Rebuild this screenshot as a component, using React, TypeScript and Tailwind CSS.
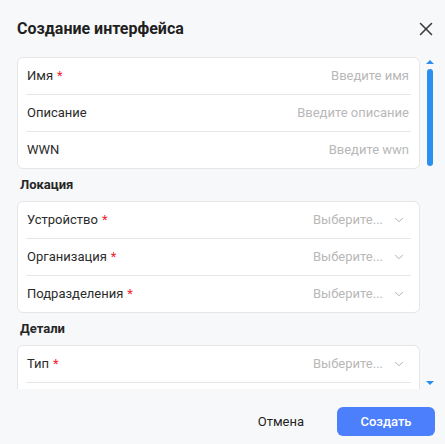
import React from 'react';
import { X, ChevronDown } from 'lucide-react';

type Field = {
  label: string;
  required?: boolean;
  placeholder: string;
  select?: boolean;
};

const generalFields: Field[] = [
  { label: 'Имя', required: true, placeholder: 'Введите имя' },
  { label: 'Описание', placeholder: 'Введите описание' },
  { label: 'WWN', placeholder: 'Введите wwn' },
];

const locationFields: Field[] = [
  { label: 'Устройство', required: true, placeholder: 'Выберите...', select: true },
  { label: 'Организация', required: true, placeholder: 'Выберите...', select: true },
  { label: 'Подразделения', required: true, placeholder: 'Выберите...', select: true },
];

// second row sits below the fold, only its divider is visible
const detailFields: Field[] = [
  { label: 'Тип', required: true, placeholder: 'Выберите...', select: true },
  { label: '', placeholder: '', select: false },
];

const FieldRow: React.FC<{ field: Field; last: boolean }> = ({ field, last }) => (
  <div className={`mx-2 flex items-center justify-between ${last ? 'h-[36px]' : 'h-[37px] border-b border-[#e4e6ea]'}`}>
    <div className="pl-px text-[13px] text-[#2b2b2b]">
      {field.label}
      {field.required && <span className="ml-1 text-[#f5222d]">*</span>}
    </div>
    {field.select ? (
      <div className="flex items-center text-[13px] text-[#b8b8b8]">
        <span>{field.placeholder}</span>
        <ChevronDown className="ml-[9px] mr-[5px] h-[14px] w-[14px] text-[#a3a3a3]" strokeWidth={1.5} />
      </div>
    ) : (
      <div className="pr-[2px] text-[13px] text-[#b8b8b8]">{field.placeholder}</div>
    )}
  </div>
);

const Card: React.FC<{ fields: Field[] }> = ({ fields }) => (
  <div className="rounded-md border border-[#e4e6ea] bg-white">
    {fields.map((f, i) => (
      <FieldRow key={i} field={f} last={i === fields.length - 1} />
    ))}
  </div>
);

const SectionTitle: React.FC<{ children: React.ReactNode }> = ({ children }) => (
  <div className="flex h-[32px] items-center pl-[3px] text-[13px] font-bold text-[#262626]">{children}</div>
);

export default function App() {
  return (
    <div
      className="flex h-[444px] w-[445px] flex-col bg-[#f7f8fa]"
      style={{ fontFamily: 'Roboto, "Liberation Sans", Arial, sans-serif' }}
    >
      {/* Header */}
      <div className="flex h-[57px] items-center justify-between pl-[17px] pr-[8px]">
        <h1 className="text-[16px] font-bold text-[#1f1f1f]">Создание интерфейса</h1>
        <X className="h-[22px] w-[22px] text-[#3a3a3a]" strokeWidth={1.7} />
      </div>

      {/* Body + scrollbar */}
      <div className="flex h-[332px] pl-[17px] pr-[11px]">
        <div className="flex-1 overflow-hidden">
          <Card fields={generalFields} />
          <SectionTitle>Локация</SectionTitle>
          <Card fields={locationFields} />
          <SectionTitle>Детали</SectionTitle>
          <Card fields={detailFields} />
        </div>
        <div className="ml-[6px] flex w-[8px] flex-col items-center">
          <div className="mt-[3px] h-0 w-0 border-x-[4px] border-b-[4px] border-x-transparent border-b-[#2b8ff0]" />
          <div className="mt-[5px] h-[97px] w-[6px] rounded-full bg-[#2b8ff0]" />
          <div className="flex-1" />
          <div className="mb-[4px] h-0 w-0 border-x-[4px] border-t-[4px] border-x-transparent border-t-[#2b8ff0]" />
        </div>
      </div>

      {/* Footer */}
      <div className="flex flex-1 items-center justify-end gap-[33px] pr-[10px] pt-[10px]">
        <button className="text-[13px] text-[#1f1f1f]">Отмена</button>
        <button className="h-[29px] w-[98px] rounded-md bg-[#4c7ffc] text-[13px] font-medium text-white">
          Создать
        </button>
      </div>
    </div>
  );
}
